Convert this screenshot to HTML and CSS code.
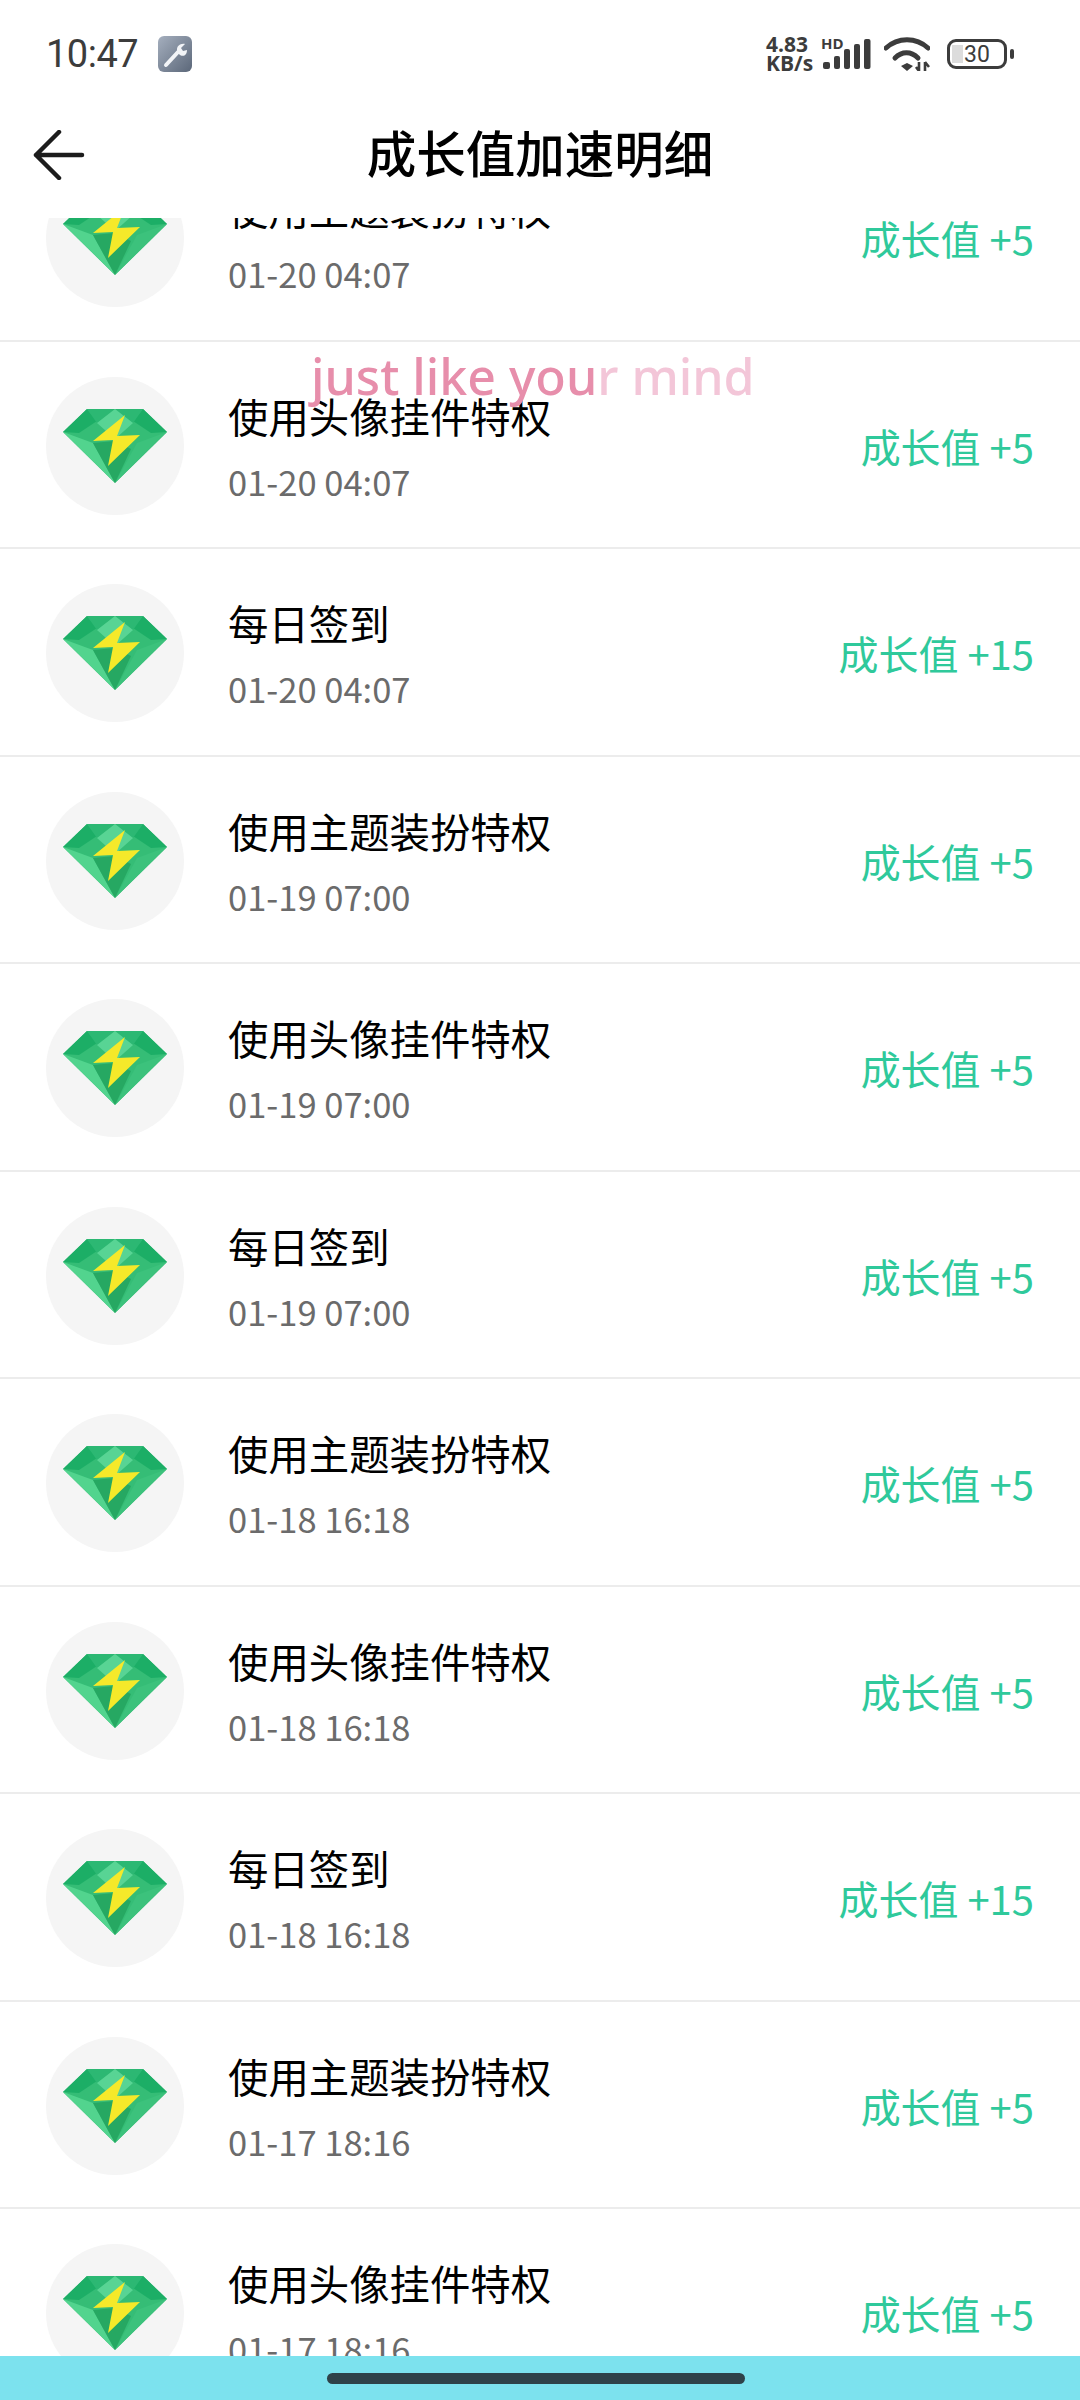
FILE: index.html
```html
<!DOCTYPE html>
<html lang="zh">
<head>
<meta charset="utf-8">
<title>成长值加速明细</title>
<link rel="stylesheet" href="styles.css">
</head>
<body>
<svg class="defs" width="0" height="0" aria-hidden="true">
  <symbol id="gem" viewBox="0 0 104 74">
    <polygon points="24,0 80,0 104,23 52,74 0,23" fill="#35bd76"/>
    <polygon points="24,0 0,23 16,24 34,12" fill="#1cae66"/>
    <polygon points="80,0 104,23 88,24 70,12" fill="#1cae66"/>
    <polygon points="24,0 52,0 34,14" fill="#2cb873"/>
    <polygon points="52,0 80,0 70,14" fill="#2cb873"/>
    <polygon points="34,14 52,0 70,14 52,30" fill="#58d494"/>
    <polygon points="0,23 30,34 52,74" fill="#52d48e"/>
    <polygon points="104,23 74,34 52,74" fill="#3cc27c"/>
    <polygon points="30,34 52,32 68,40 52,74" fill="#26a862"/>
    <polygon points="62,6 30,32 50,31 45,57 77,26 54,27" fill="#f5e92a"/>
  </symbol>
</svg>

<div class="phone">
  <header class="status">
    <div class="status-left">
      <span class="clock">10:47</span>
      <svg class="tool" viewBox="0 0 34 36">
        <defs><linearGradient id="tg" x1="0" y1="0" x2="1" y2="1"><stop offset="0" stop-color="#a5afbe"/><stop offset="1" stop-color="#5b6779"/></linearGradient></defs>
        <rect width="34" height="36" rx="6" fill="url(#tg)"/>
        <path d="M8 29 L20 16" stroke="#f2f4f7" stroke-width="4" stroke-linecap="round" fill="none"/>
        <path d="M20 17 C17 12 21 7 27 8 L23 12 L25 15 L29 14 C29 20 24 22 20 17Z" fill="#f2f4f7"/>
      </svg>
    </div>
    <div class="status-right">
      <div class="speed"><span>4.83</span><span>KB/s</span></div>
      <div class="signal">
        <span class="hd">HD</span>
        <svg class="bars" viewBox="0 0 48 30">
          <rect x="0" y="23" width="7" height="7" rx="2"/>
          <rect x="11" y="17" width="6" height="13" rx="2"/>
          <rect x="21" y="10" width="6" height="20" rx="2"/>
          <rect x="31" y="5" width="6" height="25" rx="2"/>
          <rect x="41" y="0" width="6.5" height="30" rx="2"/>
        </svg>
      </div>
      <svg class="wifi" viewBox="0 0 46 34">
        <path d="M2 11 C14 0 32 0 44 11" stroke="#3c3c3c" stroke-width="5" fill="none" stroke-linecap="round"/>
        <path d="M11 21 C18 14 27 14 34 21" stroke="#3c3c3c" stroke-width="5" fill="none" stroke-linecap="round"/>
        <path d="M17 29 L23 26 L29 29 L23 34Z" fill="#3c3c3c"/>
        <path d="M35 25 V34 M35 34 L32 30 M41 25 V34 M41 25 L45 30" stroke="#3c3c3c" stroke-width="2.6" fill="none"/>
      </svg>
      <div class="battery">
        <div class="batt-body"><span class="batt-fill"></span><span class="batt-num">30</span></div>
        <span class="batt-tip"></span>
      </div>
    </div>
  </header>

  <nav class="titlebar">
    <svg class="back" viewBox="0 0 52 50">
      <path d="M49 25 H3 M26 2 L3 25 L26 48" stroke="#1c1c1c" stroke-width="4.5" fill="none" stroke-linecap="round" stroke-linejoin="round"/>
    </svg>
    <h1 class="title">成长值加速明细</h1>
  </nav>

  <main class="viewport">
    <ul class="list">
      <li class="row"><span class="badge"><svg class="gem"><use href="#gem"/></svg></span><div class="info"><p class="name">使用主题装扮特权</p><p class="time">01-20 04:07</p></div><span class="gain">成长值 +5</span></li>
      <li class="row"><span class="badge"><svg class="gem"><use href="#gem"/></svg></span><div class="info"><p class="name">使用头像挂件特权</p><p class="time">01-20 04:07</p></div><span class="gain">成长值 +5</span></li>
      <li class="row"><span class="badge"><svg class="gem"><use href="#gem"/></svg></span><div class="info"><p class="name">每日签到</p><p class="time">01-20 04:07</p></div><span class="gain">成长值 +15</span></li>
      <li class="row"><span class="badge"><svg class="gem"><use href="#gem"/></svg></span><div class="info"><p class="name">使用主题装扮特权</p><p class="time">01-19 07:00</p></div><span class="gain">成长值 +5</span></li>
      <li class="row"><span class="badge"><svg class="gem"><use href="#gem"/></svg></span><div class="info"><p class="name">使用头像挂件特权</p><p class="time">01-19 07:00</p></div><span class="gain">成长值 +5</span></li>
      <li class="row"><span class="badge"><svg class="gem"><use href="#gem"/></svg></span><div class="info"><p class="name">每日签到</p><p class="time">01-19 07:00</p></div><span class="gain">成长值 +5</span></li>
      <li class="row"><span class="badge"><svg class="gem"><use href="#gem"/></svg></span><div class="info"><p class="name">使用主题装扮特权</p><p class="time">01-18 16:18</p></div><span class="gain">成长值 +5</span></li>
      <li class="row"><span class="badge"><svg class="gem"><use href="#gem"/></svg></span><div class="info"><p class="name">使用头像挂件特权</p><p class="time">01-18 16:18</p></div><span class="gain">成长值 +5</span></li>
      <li class="row"><span class="badge"><svg class="gem"><use href="#gem"/></svg></span><div class="info"><p class="name">每日签到</p><p class="time">01-18 16:18</p></div><span class="gain">成长值 +15</span></li>
      <li class="row"><span class="badge"><svg class="gem"><use href="#gem"/></svg></span><div class="info"><p class="name">使用主题装扮特权</p><p class="time">01-17 18:16</p></div><span class="gain">成长值 +5</span></li>
      <li class="row"><span class="badge"><svg class="gem"><use href="#gem"/></svg></span><div class="info"><p class="name">使用头像挂件特权</p><p class="time">01-17 18:16</p></div><span class="gain">成长值 +5</span></li>
    </ul>
    <div class="watermark"><span class="wm-deep">just like you</span><span class="wm-pale">r mind</span></div>
  </main>

  <footer class="navbar"><span class="home"></span></footer>
</div>
</body>
</html>
```
FILE: styles.css
```css
* { box-sizing: border-box; }
html, body { margin: 0; padding: 0; background: #fff; }
body { font-family: "Noto Sans CJK SC", "Noto Sans", sans-serif; }
.defs { position: absolute; }
.phone { width: 1080px; height: 2400px; display: flex; flex-direction: column; overflow: hidden; background: #fff; }

.status { height: 100px; flex: none; display: flex; justify-content: space-between; align-items: center; padding: 8px 0 0 46px; color: #3c3c3c; }
.status-left { display: flex; align-items: center; gap: 20px; }
.clock { font-family: Roboto, sans-serif; font-size: 38px; line-height: 1; letter-spacing: -0.5px; }
.tool { width: 34px; height: 36px; display: block; }
.status-right { display: flex; align-items: center; padding-right: 66px; }
.speed { display: flex; flex-direction: column; font-family: "Open Sans", sans-serif; font-weight: 700; font-size: 21px; line-height: 19px; width: 55px; }
.signal { position: relative; width: 50px; height: 32px; }
.hd { position: absolute; left: 0; top: -3px; font-family: "Open Sans", sans-serif; font-weight: 700; font-size: 15px; line-height: 16px; }
.bars { position: absolute; left: 2px; top: 1px; width: 48px; height: 30px; fill: #3c3c3c; }
.wifi { width: 46px; height: 34px; margin-left: 13px; display: block; }
.battery { display: flex; align-items: center; margin-left: 17px; gap: 3px; }
.batt-body { position: relative; width: 60px; height: 30px; border: 3px solid #3c3c3c; border-radius: 9px; display: flex; align-items: center; justify-content: center; }
.batt-fill { position: absolute; left: 2px; top: 3px; bottom: 3px; width: 11px; background: #dcdcdc; }
.batt-num { position: relative; font-family: Roboto, sans-serif; font-size: 23px; line-height: 1; color: #3c3c3c; }
.batt-tip { width: 4px; height: 10px; background: #3c3c3c; border-radius: 2px; }

.titlebar { position: relative; height: 118px; flex: none; display: flex; align-items: center; justify-content: center; padding: 6px 0 0; }
.back { position: absolute; left: 33px; top: 30px; width: 52px; height: 50px; }
.title { margin: 0; font-size: 49.5px; font-weight: 500; line-height: 1; color: #000; position: relative; top: -10px; }

.viewport { position: relative; flex: 1; min-height: 0; overflow: hidden; }
.list { list-style: none; margin: -84px 0 0; padding: 0; }
.row { height: 207.5px; display: flex; align-items: center; padding: 3px 46px 0; border-bottom: 2px solid #ececec; }
.badge { width: 138px; height: 138px; flex: none; border-radius: 50%; background: #f5f5f5; display: flex; align-items: center; justify-content: center; }
.gem { width: 104px; height: 74px; display: block; }
.info { flex: 1; min-width: 0; margin-left: 44px; }
.name { margin: 0; font-size: 40.4px; line-height: 56px; color: #000; }
.time { margin: 14px 0 0; font-size: 34.5px; line-height: 46px; color: #6b6b6b; font-family: "Noto Sans CJK SC", sans-serif; }
.gain { font-size: 40px; line-height: 56px; color: #2fc99b; white-space: nowrap; }

.watermark { position: absolute; left: 311px; top: 128px; font-family: "Noto Sans", sans-serif; font-weight: 500; font-size: 50px; line-height: 60px; white-space: nowrap; }
.wm-deep { color: #e78eab; }
.wm-pale { color: #f3c6d8; }

.navbar { height: 44px; flex: none; background: #7ce2ee; display: flex; align-items: center; justify-content: center; }
.home { width: 418px; height: 11px; border-radius: 6px; background: #2e4249; margin-right: 8px; }
```
